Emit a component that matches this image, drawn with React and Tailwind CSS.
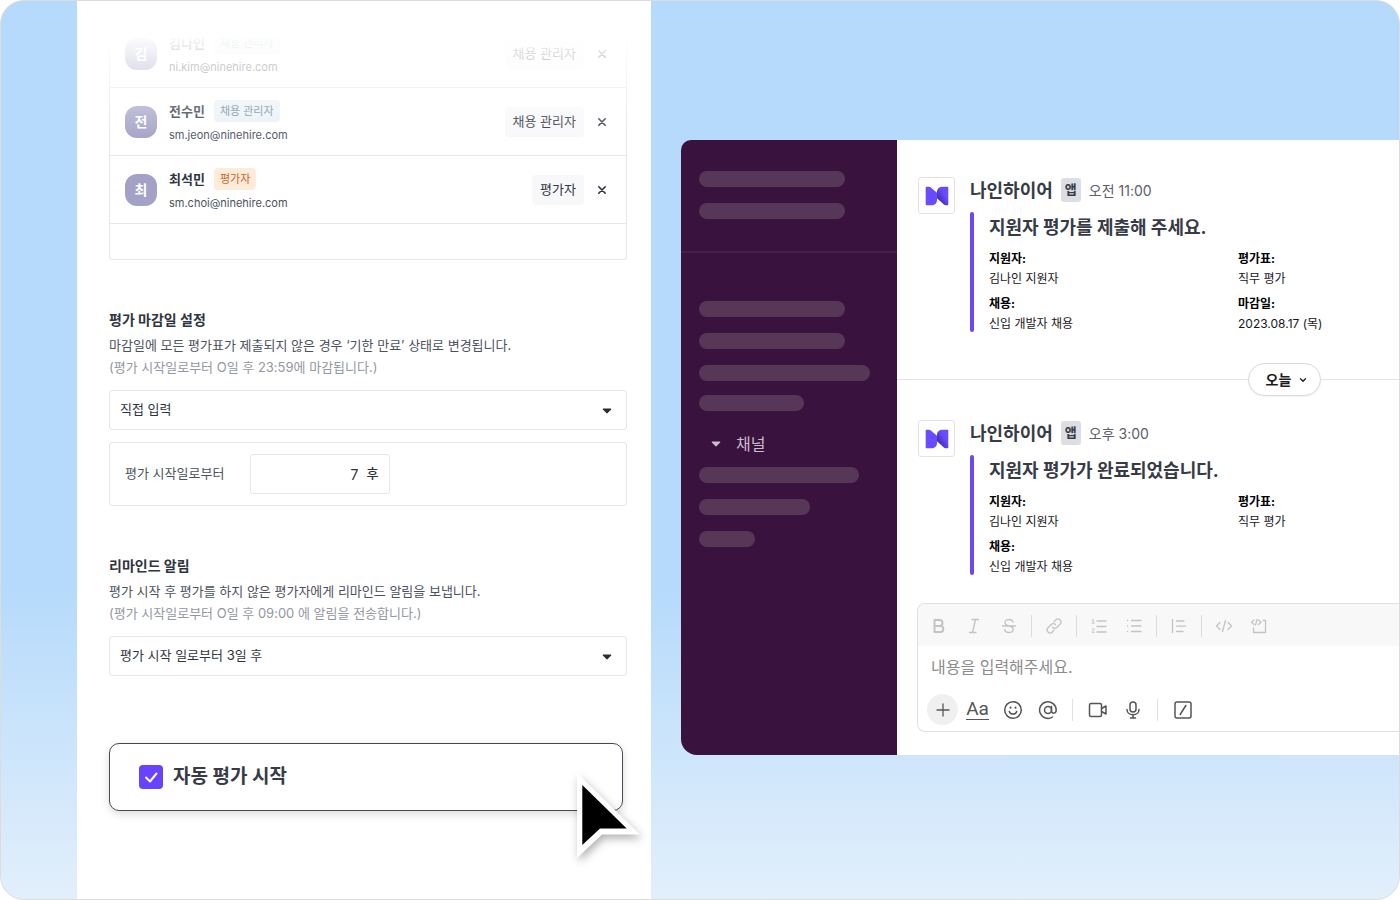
import React, { useState } from "react";

const members = [
  { initial: "김", name: "김나인", email: "ni.kim@ninehire.com", role: "채용 관리자", badge: "bg-[#e9f1f6] text-[#6b8494]" },
  { initial: "전", name: "전수민", email: "sm.jeon@ninehire.com", role: "채용 관리자", badge: "bg-[#e9f1f6] text-[#6b8494]" },
  { initial: "최", name: "최석민", email: "sm.choi@ninehire.com", role: "평가자", badge: "bg-[#ffecd8] text-[#c7632c]" },
];

const messages = [
  {
    time: "오전 11:00",
    title: "지원자 평가를 제출해 주세요.",
    fields: [
      ["지원자:", "김나인 지원자"],
      ["평가표:", "직무 평가"],
      ["채용:", "신입 개발자 채용"],
      ["마감일:", "2023.08.17 (목)"],
    ],
  },
  {
    time: "오후 3:00",
    title: "지원자 평가가 완료되었습니다.",
    fields: [
      ["지원자:", "김나인 지원자"],
      ["평가표:", "직무 평가"],
      ["채용:", "신입 개발자 채용"],
    ],
  },
];

const Icon = ({ size = 18, width = 1.3, children }) => (
  <svg
    width={size}
    height={size}
    viewBox={`0 0 ${size} ${size}`}
    fill="none"
    stroke="currentColor"
    strokeWidth={width}
    strokeLinecap="round"
    strokeLinejoin="round"
    aria-hidden="true"
  >
    {children}
  </svg>
);

const Caret = ({ className }) => (
  <svg width="10" height="6" viewBox="0 0 10 6" className={className} aria-hidden="true">
    <path d="M1.2 0.5h7.6a.6.6 0 0 1 .4 1L5.4 5.3a.6.6 0 0 1-.8 0L.8 1.5a.6.6 0 0 1 .4-1z" fill="currentColor" />
  </svg>
);

const MemberRow = ({ member }) => (
  <li className="flex h-[68px] items-center border-b border-[#e5e6e8] pl-[15px] pr-[18px]">
    <span className="flex size-8 shrink-0 items-center justify-center rounded-xl bg-[#a3a2c6] text-sm font-bold text-white">
      {member.initial}
    </span>
    <div className="ml-3 flex min-w-0 flex-1 flex-col gap-1">
      <div className="flex items-center gap-[9px]">
        <span className="text-[13px] leading-[22px] font-bold text-[#2e3540]">{member.name}</span>
        <span className={`rounded-sm px-[6px] text-[11px] leading-[22px] ${member.badge}`}>{member.role}</span>
      </div>
      <span className="truncate text-[11px] leading-[18px] text-[#4b525e]">{member.email}</span>
    </div>
    <button className="h-[30px] rounded bg-[#f8f8fb] px-2 text-[13px] text-[#2e3540]">{member.role}</button>
    <button aria-label={`${member.name} 삭제`} className="ml-3 text-[#2e3540]">
      <Icon size={12} width={1.6}>
        <path d="M2.8 2.8l6.400 6.400M9.200 2.800l-6.400 6.400" />
      </Icon>
    </button>
  </li>
);

const SelectBox = ({ id, options }) => (
  <div className="relative">
    <select
      id={id}
      className="h-10 w-full appearance-none rounded-[3px] border border-[#e5e6e8] bg-white px-[10px] text-[13px] text-[#2e3540]"
    >
      {options.map((o) => (
        <option key={o}>{o}</option>
      ))}
    </select>
    <Caret className="pointer-events-none absolute top-[18px] right-[15px] text-[#2a2d33]" />
  </div>
);

const Setting = ({ id, title, desc, note, options, children }) => (
  <section className="mt-12">
    <label htmlFor={id} className="block text-[14px] leading-6 font-bold text-[#2e3540]">
      {title}
    </label>
    <p className="mt-[2px] text-[13px] leading-[22px] text-[#4b525e]">{desc}</p>
    <p className="mb-3 text-[13px] leading-[22px] text-[#9398a1]">{note}</p>
    <SelectBox id={id} options={options} />
    {children}
  </section>
);

const Cursor = () => (
  <svg
    width="64"
    height="86"
    viewBox="0 0 64 86"
    className="pointer-events-none absolute top-[30px] -right-[18px] overflow-visible drop-shadow-[2px_4px_4px_rgba(0,0,0,0.3)]"
    aria-hidden="true"
  >
    <path d="M0 0L63 61.5H25L0 85z" fill="#fff" />
    <path d="M5.3 12L49.7 55.5H23L5.3 72z" fill="#000" />
  </svg>
);

const Logo = () => (
  <div className="flex size-[37px] shrink-0 items-center justify-center rounded-[3px] border border-[#e2e2e8] bg-white">
    <svg width="24" height="20" viewBox="0 0 24 20" aria-hidden="true">
      <defs>
        <linearGradient id="fold" gradientUnits="userSpaceOnUse" x1="11" y1="12" x2="19" y2="7">
          <stop offset="0" stopColor="#3c2ba6" />
          <stop offset="1" stopColor="#6a4bff" />
        </linearGradient>
      </defs>
      <path d="M1.500 .8H4c.8 0 1.200.2 1.800.7L12 6.800v7c0 3.200-2 5.500-5 5.500H1.500c-.5 0-.8-.3-.8-.8V1.600c0-.5.3-.8.8-.8z" fill="#6a4bff" />
      <path d="M22.500 .8c.5 0 .8.300.8.800v17c0 .5-.3.700-.8.700h-1.800c-.8 0-1.200-.2-1.800-.7L12 12.300V6.300c0-3.200 2-5.500 5-5.500z" fill="url(#fold)" />
    </svg>
  </div>
);

const Message = ({ message }) => (
  <article className="flex gap-[15px] pl-[21px]">
    <Logo />
    <div className="min-w-0 flex-1 pt-px">
      <header className="flex h-6 items-center">
        <span className="text-[18px] font-bold text-[#363b45]">나인하이어</span>
        <span className="ml-2 flex h-6 w-5 items-center justify-center rounded-[3px] bg-[#dddee3] text-[13px] font-bold text-[#363b45]">
          앱
        </span>
        <time className="ml-2 text-[14px] text-[#5b606b]">{message.time}</time>
      </header>
      <div className="mt-[10px] flex gap-[15px]">
        <div className="mb-[2px] w-1 shrink-0 rounded-full bg-[#6a48f5]" />
        <div className="min-w-0 flex-1">
          <h3 className="text-[18px] leading-[31px] font-bold text-[#363b45]">{message.title}</h3>
          <dl className="mt-[6px] grid grid-cols-[249px_1fr] gap-y-[5px] text-[12px] leading-5 text-[#16171a]">
            {message.fields.map(([label, value]) => (
              <div key={label}>
                <dt className="font-bold text-black">{label}</dt>
                <dd>{value}</dd>
              </div>
            ))}
          </dl>
        </div>
      </div>
    </div>
  </article>
);

const Tool = ({ label, children }) => (
  <button aria-label={label} className="flex w-[35px] shrink-0 items-center justify-center">
    {children}
  </button>
);

const FormatSep = () => <span className="mr-1 ml-[5px] h-[22px] w-px shrink-0 bg-[#dcdcdc]" />;
const ToolSep = () => <span className="mx-[7px] h-[22px] w-px shrink-0 bg-[#e2e2e2]" />;

const Composer = () => (
  <div className="mt-[26px] ml-5 overflow-hidden rounded-l-lg border border-r-0 border-[#e0e0e0]">
    <div className="flex h-[42px] items-center bg-[#f8f8f8] pt-[2px] pl-[3px] text-[#c3c3c3]">
      <Tool label="굵게">
        <Icon width={2}>
          <path d="M4.500 3h5a3 3 0 0 1 0 6h-5zM4.500 9h5.800a3 3 0 0 1 0 6H4.500z" />
        </Icon>
      </Tool>
      <Tool label="기울임">
        <Icon>
          <path d="M7 2.500h6.500M4.500 15.500H11M10.500 2.500l-3 13" />
        </Icon>
      </Tool>
      <Tool label="취소선">
        <Icon>
          <path d="M2.500 9h13M13 5.200C12.500 3.300 11 2.500 9 2.500c-2.300 0-4 1.200-4 3C5 7.500 6.500 8.300 9 9c2.500.6 4.200 1.400 4.200 3.300 0 2-1.800 3.200-4.200 3.200s-4-1-4.500-3" />
        </Icon>
      </Tool>
      <FormatSep />
      <Tool label="링크">
        <Icon>
          <path d="M7.500 10.500a3 3 0 0 0 4.300 0l3.200-3.200a3 3 0 0 0-4.300-4.300L9 4.700M10.500 7.500a3 3 0 0 0-4.300 0L3 10.700A3 3 0 0 0 7.300 15L9 13.300" />
        </Icon>
      </Tool>
      <FormatSep />
      <Tool label="번호 목록">
        <Icon>
          <path d="M7 4h9M7 9.500h9M7 15h9" />
          <path d="M2.200 3.200l1-.7v3.500M2.200 6h2M2.200 12.200c.3-.9 2-.8 1.900.3 0 .8-1.900 1.400-1.900 2.800h2.100" strokeWidth="1" />
        </Icon>
      </Tool>
      <Tool label="글머리 목록">
        <Icon>
          <path d="M6.500 3.500H16M6.500 9H16M6.500 14.500H16M2.500 3.500h.1M2.500 9h.1M2.500 14.500h.1" />
        </Icon>
      </Tool>
      <FormatSep />
      <Tool label="인용">
        <Icon>
          <path d="M2.500 2.500v13M6.500 4H14M6.500 9.200h9M6.500 14.500H13" />
        </Icon>
      </Tool>
      <FormatSep />
      <Tool label="코드">
        <Icon>
          <path d="M5 5.500L1.500 9 5 12.500M13 5.500L16.500 9 13 12.500M10.500 3.500l-3 11" />
        </Icon>
      </Tool>
      <Tool label="코드 블록">
        <Icon>
          <path d="M4 3L1.500 5.200 4 7.500M8.500 3L11 5.200 8.500 7.500M7 2.500L5.500 8M13 3.500h2.500v12h-12V11" />
        </Icon>
      </Tool>
    </div>
    <input
      aria-label="메시지"
      placeholder="내용을 입력해주세요."
      className="block h-[42px] w-full px-[13px] text-[16px] outline-none placeholder:text-[#8c8c8c]"
    />
    <div className="flex h-[43px] items-center pl-[7px] text-[#555]">
      <Tool label="첨부">
        <span className="flex size-[31px] items-center justify-center rounded-full bg-[#f0f0f0]">
          <Icon>
            <path d="M3 9h12M9 3v12" />
          </Icon>
        </span>
      </Tool>
      <Tool label="서식">
        <span className="border-b border-[#555] font-['Roboto',sans-serif] text-[19px] leading-5">Aa</span>
      </Tool>
      <Tool label="이모지">
        <Icon size={20} width={1.5}>
          <circle cx="10" cy="10" r="8.300" />
          <path d="M6.300 11.500c.8 3.400 6.600 3.400 7.400 0" />
          <path d="M7.500 7.400v.3M12.500 7.400v.3" strokeWidth="2" />
        </Icon>
      </Tool>
      <Tool label="멘션">
        <Icon size={20} width={1.5}>
          <circle cx="10" cy="10" r="3.500" />
          <path d="M13.500 6.500V11c0 3 4.700 3 4.700-1a8.300 8.300 0 1 0-3.700 7" />
        </Icon>
      </Tool>
      <ToolSep />
      <Tool label="영상">
        <Icon size={20} width={1.500}>
          <rect x="1.500" y="3.500" width="12" height="13" rx="1.500" />
          <path d="M13.500 8.500L18 6v8l-4.500-2.500" />
        </Icon>
      </Tool>
      <Tool label="음성">
        <Icon size={20} width={1.500}>
          <rect x="7" y="2" width="6" height="10" rx="3" />
          <path d="M4 9.500c0 7 12 7 12 0M10 15v3M7.500 18h5" />
        </Icon>
      </Tool>
      <ToolSep />
      <Tool label="명령어">
        <Icon size={20} width={1.500}>
          <rect x="2" y="2" width="16" height="16" rx="2" />
          <path d="M12.800 5.500l-5.600 9" />
        </Icon>
      </Tool>
    </div>
  </div>
);

const Bar = ({ className }) => <div className={`h-4 rounded-full bg-[#573757] ${className}`} />;

const Sidebar = () => (
  <aside className="w-[216px] shrink-0 rounded-tl-[10px] rounded-bl-2xl bg-[#39123d]">
    <div className="flex h-[113px] flex-col gap-4 border-b-2 border-[#45204a] pt-[31px] pl-[18px]">
      <Bar className="w-[146px]" />
      <Bar className="w-[146px]" />
    </div>
    <div className="flex flex-col gap-4 pt-12 pl-[18px]">
      <Bar className="w-[146px]" />
      <Bar className="w-[146px]" />
      <Bar className="w-[171px]" />
      <Bar className="-mt-[2px] w-[105px]" />
    </div>
    <button className="mt-[21px] flex h-6 items-center gap-[15px] pl-[30px] text-[16px] text-[#cbbccb]">
      <Caret />
      채널
    </button>
    <div className="mt-[11px] flex flex-col gap-4 pl-[18px]">
      <Bar className="w-[160px]" />
      <Bar className="w-[111px]" />
      <Bar className="w-[56px]" />
    </div>
  </aside>
);

export default function App() {
  const [autoStart, setAutoStart] = useState(true);

  return (
    <div className="min-h-screen bg-white font-['Inter','Noto_Sans_CJK_KR',sans-serif]">
      <div className="flex min-h-screen items-stretch gap-[30px] overflow-hidden rounded-3xl border border-[#dcdcdc] bg-linear-to-b from-[#b5dafb] from-65% to-[#e2effb] pl-[76px]">
        {/* Settings panel */}
        <main className="relative min-w-0 flex-[518] bg-white pt-[19px] pr-6 pb-8 pl-8">
          <ul className="rounded-[3px] border border-t-0 border-[#e5e6e8] pb-[35px]">
            {members.map((m) => (
              <MemberRow key={m.email} member={m} />
            ))}
          </ul>
          <div className="pointer-events-none absolute inset-x-0 top-0 h-[140px] bg-linear-to-b from-white from-24% to-white/0" />

          <Setting
            id="deadline"
            title="평가 마감일 설정"
            desc="마감일에 모든 평가표가 제출되지 않은 경우 ‘기한 만료’ 상태로 변경됩니다."
            note="(평가 시작일로부터 O일 후 23:59에 마감됩니다.)"
            options={["직접 입력"]}
          >
            <div className="mt-3 flex h-16 items-center gap-[26px] rounded-[3px] border border-[#e5e6e8] px-[15px] text-[13px] text-[#4b525e]">
              <label htmlFor="days">평가 시작일로부터</label>
              <div className="flex h-10 w-[140px] items-center gap-2 rounded-[3px] border border-[#e5e6e8] pr-[11px] text-[#2e3540]">
                <input id="days" defaultValue="7" className="w-full min-w-0 bg-transparent text-right text-[14px] outline-none" />
                <span className="font-medium">후</span>
              </div>
            </div>
          </Setting>

          <Setting
            id="remind"
            title="리마인드 알림"
            desc="평가 시작 후 평가를 하지 않은 평가자에게 리마인드 알림을 보냅니다."
            note="(평가 시작일로부터 O일 후 09:00 에 알림을 전송합니다.)"
            options={["평가 시작 일로부터 3일 후"]}
          />

          <div className="relative mt-[67px] mr-1">
            <label className="flex h-[68px] items-center gap-[10px] rounded-[10px] border border-[#454b55] bg-white pl-[29px] shadow-[0_3px_8px_rgba(0,0,0,0.14)]">
              <span className="relative flex size-6">
                <input
                  type="checkbox"
                  checked={autoStart}
                  onChange={(e) => setAutoStart(e.target.checked)}
                  className="size-6 appearance-none rounded bg-[#d5d5dd] checked:bg-[#6743ff]"
                />
                {autoStart && (
                  <svg width="24" height="24" viewBox="0 0 24 24" className="pointer-events-none absolute inset-0" aria-hidden="true">
                    <path d="M7 12.500l4 4 6.500-8" fill="none" stroke="#fff" strokeWidth="2" strokeLinecap="round" strokeLinejoin="round" />
                  </svg>
                )}
              </span>
              <span className="text-[19px] font-bold text-[#363b45]">자동 평가 시작</span>
            </label>
            <Cursor />
          </div>
        </main>

        {/* Messenger window */}
        <div className="mt-[139px] flex min-w-0 flex-[718] self-start">
          <Sidebar />
          <div className="min-w-0 flex-1 bg-white pt-[37px] pb-[23px]">
            <Message message={messages[0]} />
            <div className="mt-[29px] mb-6 flex items-center">
              <span className="h-px w-[351px] bg-[#e4e4e4]" />
              <button className="flex h-[33px] w-[73px] items-center justify-center gap-2 rounded-full border border-[#d9d9d9] bg-white pl-1 text-[14px] font-bold text-[#1d1c1d] shadow-xs">
                오늘
                <Icon size={8} width={1.3}>
                  <path d="M1.500 2.800L4 5.300l2.500-2.500" />
                </Icon>
              </button>
              <span className="h-px flex-1 bg-[#e4e4e4]" />
            </div>
            <Message message={messages[1]} />
            <Composer />
          </div>
        </div>
      </div>
    </div>
  );
}
